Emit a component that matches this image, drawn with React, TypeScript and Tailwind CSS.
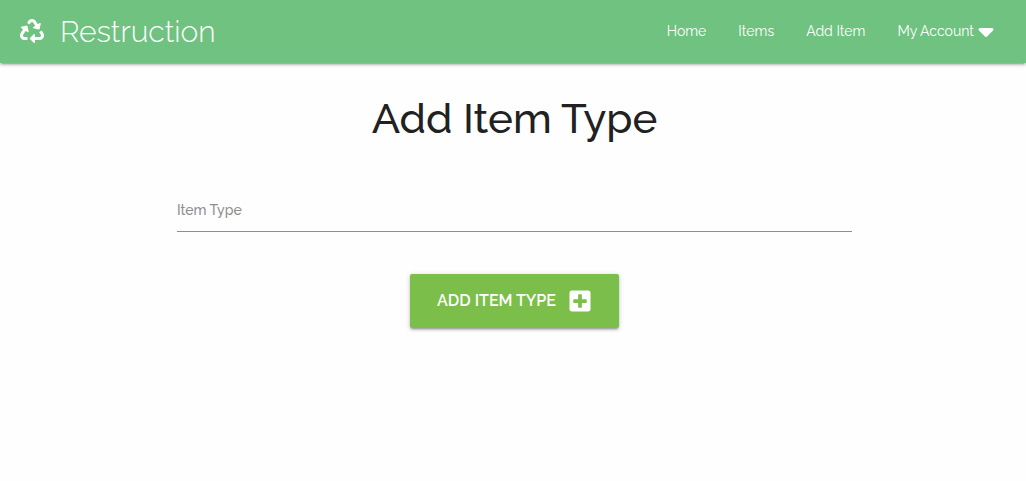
import { useState } from "react";
import { FaRecycle, FaPlusSquare } from "react-icons/fa";
import { FaCaretDown } from "react-icons/fa6";

const links = ["Home", "Items", "Add Item"];

export default function App() {
  const [itemType, setItemType] = useState("");
  return (
    <div className="min-h-screen bg-[#fefefe] font-['Raleway','Lato',sans-serif] text-[#212121]">
      <nav className="flex h-[63px] items-center justify-between bg-[#6fc27f] pr-5 pb-px pl-5 text-white shadow-[0_2px_2px_0_rgba(0,0,0,0.14),0_3px_1px_-2px_rgba(0,0,0,0.12),0_1px_5px_0_rgba(0,0,0,0.2)]">
        <a href="#" className="flex items-center gap-4 text-[30px] font-light">
          <FaRecycle className="size-6" />
          <span>Restruction</span>
        </a>
        <ul className="flex items-center text-[14px]">
          {links.map((label) => (
            <li key={label}>
              <a href="#" className="px-4">{label}</a>
            </li>
          ))}
          <li>
            <a href="#" className="flex items-center pr-2 pl-4">
              My Account
              <FaCaretDown className="size-6" />
            </a>
          </li>
        </ul>
      </nav>
      <main className="pl-[3px]">
        <div className="mx-auto w-[66%]">
          <h1 className="pt-6 text-center text-[42px] leading-16 font-medium">Add Item Type</h1>
          <form className="flex flex-col items-center" onSubmit={(e) => e.preventDefault()}>
            <label htmlFor="item-type" className="mt-[47px] w-full text-[14px] leading-6 font-medium text-[#8e8e8e]">Item Type</label>
            <input
              id="item-type"
              value={itemType}
              onChange={(e) => setItemType(e.target.value)}
              className="h-2.5 w-full border-b border-[#8e8e8e] outline-none"
            />
            <button type="submit" className="mt-[42px] flex h-[54px] items-center gap-3 rounded-xs bg-[#7bbe4a] px-[27px] text-[16px] font-semibold text-white uppercase shadow-[0_2px_2px_0_rgba(0,0,0,0.14),0_3px_1px_-2px_rgba(0,0,0,0.12),0_1px_5px_0_rgba(0,0,0,0.2)]">
              Add Item Type
              <FaPlusSquare className="size-6" />
            </button>
          </form>
        </div>
      </main>
    </div>
  );
}
